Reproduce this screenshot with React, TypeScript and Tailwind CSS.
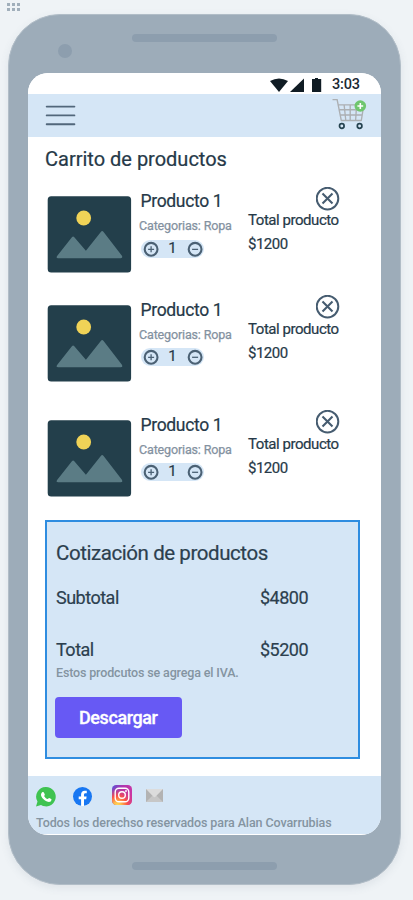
import type { ReactNode } from "react";

function Speaker({ className }: { className: string }) {
  return <div className={`h-2 w-[145.5px] rounded-full bg-[#8d9eae] ${className}`} />;
}

function GridDots() {
  return (
    <div className="grid h-[14px] shrink-0 grid-cols-[3px_3px_3px] content-start gap-[2px] pt-[3px] pl-[7px]">
      {[0, 1, 2, 3, 4, 5].map((i) => (
        <div key={i} className="size-[3px] bg-[#a1afbb]" />
      ))}
    </div>
  );
}

function StatusBar() {
  return (
    <div className="flex h-[20.5px] items-start bg-white">
      <svg className="mt-[4.5px] ml-[242px] h-[14px] w-[52px] shrink-0" viewBox="0 0 52 14" fill="#101c24">
        <path d="M0 3.1Q9 -2.2 18 3.1L9 14Z" />
        <path d="M20 14L34 .4V14Z" />
        <path d="M42 1h3V0h3v1h3.2v13H42Z" />
      </svg>
      <span className="mt-[2px] ml-[10.5px] text-[14.5px] leading-5 font-medium tracking-[-0.15px] whitespace-nowrap text-[#1c2933]">
        3:03
      </span>
    </div>
  );
}

function CartIcon() {
  return (
    <svg className="mt-[5px] h-[31px] w-[35px]" viewBox="0 0 35 31" fill="none">
      <g stroke="#acafb2" strokeWidth="1.35" strokeLinejoin="round">
        <path d="M.5 1.5h4.6l4.2 21h20l2.5-15.7H6.1M7 11.7h24M8.2 17h21.9M12.1 6.8l1.7 15.7M18.2 6.8v15.7M24.6 6.8l-1 15.7" transform="translate(0 -1)" />
      </g>
      <g stroke="#24424f" strokeWidth="1.7" fill="#d5e6f6">
        <circle cx="9.8" cy="27" r="2.3" />
        <circle cx="27.6" cy="27" r="2.3" />
      </g>
      <circle cx="28.3" cy="7" r="5.8" fill="#6fc66f" />
      <path d="M25.4 7h5.8M28.3 4.1v5.8" stroke="#fff" strokeWidth="1.6" />
    </svg>
  );
}

function Header() {
  return (
    <header className="flex h-[43px] items-start justify-between bg-[#d5e6f6] pr-[14px] pl-[17.5px]">
      <svg className="mt-[11px] h-[22px] w-[31px]" viewBox="0 0 31 22" stroke="#52677b" strokeWidth="1.9" strokeLinecap="round">
        <path d="M1.7 1.6h27.7M1.7 10.4h27.7M1.7 19.3h27.7" />
      </svg>
      <CartIcon />
    </header>
  );
}

function Picture() {
  return (
    <svg className="mt-[9px] h-[77px] w-[85px] shrink-0" viewBox="-0.4 0 85 77">
      <rect x=".3" y=".2" width="83.4" height="76.4" rx="3.5" fill="#233f4b" />
      <circle cx="36.3" cy="22" r="7.4" fill="#f0d357" />
      <path
        d="M24.7 41Q25.7 39.8 26.7 41L38.5 54.8L53.6 35.7Q54.8 34.3 56 35.7L74.5 59.7Q75.7 62.2 73.3 62.2H10.7Q8.3 62.2 9.7 60Z"
        fill="#5b7c85"
      />
    </svg>
  );
}

function RoundGlyph({ plus }: { plus?: boolean }) {
  return (
    <svg className="size-[16px]" viewBox="-.6 -.8 16 16" fill="none" stroke="#4b6174">
      <circle cx="7.5" cy="7.5" r="6.4" strokeWidth="2.1" />
      <path d={plus ? "M4.5 7.5h6M7.5 4.5v6" : "M4.5 7.5h6"} strokeWidth="1.3" />
    </svg>
  );
}

function Product({ height, lift }: { height: string; lift: string }) {
  return (
    <article className={`flex pl-[19.5px] ${height}`}>
      <Picture />
      <div className="ml-[7px] w-[109px] whitespace-nowrap">
        <h2 className="mt-1 ml-[1.5px] text-[17.5px] leading-5 tracking-[-0.33px] text-[#263948] [-webkit-text-stroke:0.2px]">
          Producto 1
        </h2>
        <p className="mt-[7px] text-[12.5px] leading-4 tracking-[-0.15px] text-[#8391a0] [-webkit-text-stroke:0.25px]">
          Categorias: Ropa
        </p>
        <div
          className={`ml-[2px] flex h-[18px] w-[63px] items-center justify-between rounded-full bg-[#d5e6f6] px-[1.5px] ${lift}`}
        >
          <RoundGlyph plus />
          <span className="-mt-[2px] text-[15px] leading-[18px] text-[#263948] [-webkit-text-stroke:0.2px]">1</span>
          <RoundGlyph />
        </div>
      </div>
      <div className="whitespace-nowrap text-[#263948] [-webkit-text-stroke:0.2px]">
        <svg
          className={`ml-[67.5px] size-6 ${lift === "mt-[6px]" ? "mt-0" : "-mt-px mb-px"}`}
          viewBox="0.5 0 24 24"
          fill="none"
          stroke="#465c70"
        >
          <circle cx="12" cy="11.6" r="10.8" strokeWidth="2" />
          <path d="M7 6.6l10 10M17 6.6l-10 10" strokeWidth="2.1" />
        </svg>
        <p className="text-[15px] leading-[18px] tracking-[-0.45px]">Total producto</p>
        <p className="mt-[6px] text-[15px] leading-[18px] tracking-[-0.5px]">$1200</p>
      </div>
    </article>
  );
}

function PriceRow({ label, price, className }: { label: string; price: string; className: string }) {
  return (
    <div className={`flex text-[18px] leading-6 tracking-[-0.5px] whitespace-nowrap ${className}`}>
      <span className="w-[204px]">{label}</span>
      <span>{price}</span>
    </div>
  );
}

function Quote() {
  return (
    <section className="ml-[17.5px] h-[239px] w-[315px] border-2 border-[#2f8de0] bg-[#d5e6f6] pl-[9px] text-[#2c3f4e]">
      <h2 className="mt-[17px] text-[20.5px] leading-7 tracking-[-0.43px] whitespace-nowrap [-webkit-text-stroke:0.2px]">
        Cotización de productos
      </h2>
      <PriceRow label="Subtotal" price="$4800" className="mt-[19px] [-webkit-text-stroke:0.2px]" />
      <PriceRow label="Total" price="$5200" className="mt-[28px] [-webkit-text-stroke:0.2px]" />
      <p className="mt-[3px] text-[12.5px] leading-4 font-medium tracking-[-0.15px] whitespace-nowrap text-[#8494a1]">
        Estos prodcutos se agrega el IVA.
      </p>
      <button className="mt-4 -ml-px flex h-[41px] w-[126.5px] items-center justify-center rounded-[4px] bg-[#6759f4] text-[18px] font-medium tracking-[-0.42px] text-white [-webkit-text-stroke:0.3px]">
        Descargar
      </button>
    </section>
  );
}

function WhatsApp() {
  return (
    <svg className="mt-[11px] h-5 w-[20px]" viewBox="0 0 20 20">
      <path d="M10 0A9.7 9.7 0 1 1 5 18L0 19.4L1.5 14.6A9.7 9.7 0 0 1 10 0Z" fill="#3fc351" />
      <path
        d="M6.2 5.3c.5-.6 1.4-.5 1.7.1l.9 2c.2.6-.7 1.2-.7 1.6.8 1.6 2.1 2.6 3.6 3.1.5.1.9-1.2 1.5-1l2 1c.7.4.1 1.8-.5 2.3-1.5 1-3.8.3-5.7-.9-2-1.3-3.8-3.5-4-5.2-.1-1.2.5-2.3 1.2-3Z"
        fill="#fff"
      />
    </svg>
  );
}

function Facebook() {
  return (
    <svg className="mt-[11px] ml-[17px] h-[19px] w-[19px]" viewBox="0 0 24 24">
      <circle cx="12" cy="12" r="12" fill="#1877f2" />
      <path
        d="M16.7 15.5l.5-3.5h-3.3V9.7c0-1 .5-1.9 2-1.9h1.5v-3s-1.4-.2-2.7-.2c-2.7 0-4.5 1.7-4.5 4.7V12h-3v3.5h3v8.4a12 12 0 0 0 3.7 0v-8.4Z"
        fill="#fff"
      />
    </svg>
  );
}

function Instagram() {
  return (
    <svg className="mt-[9px] ml-[20px] size-5" viewBox="0 0 20 20">
      <defs>
        <linearGradient id="ig-base" x1="0" y1="0" x2="1" y2=".25">
          <stop offset="0" stopColor="#5a51d5" />
          <stop offset=".5" stopColor="#ae36b0" />
          <stop offset="1" stopColor="#c936a5" />
        </linearGradient>
        <radialGradient id="ig-glow" cx=".27" cy="1.05" r=".95">
          <stop offset="0" stopColor="#ffdc5c" />
          <stop offset=".2" stopColor="#ffc14c" />
          <stop offset=".52" stopColor="#fb5245" />
          <stop offset="1" stopColor="#d13494" stopOpacity="0" />
        </radialGradient>
      </defs>
      <rect width="20" height="20" rx="4.2" fill="url(#ig-base)" />
      <rect width="20" height="20" rx="4.2" fill="url(#ig-glow)" />
      <g fill="none" stroke="#fff" strokeWidth="1.4">
        <rect x="3.2" y="3.2" width="13.6" height="13.6" rx="3.8" />
        <circle cx="10" cy="10" r="3.3" />
      </g>
      <circle cx="14" cy="6" r=".95" fill="#fff" />
    </svg>
  );
}

function Mail() {
  return (
    <svg className="mt-[13px] ml-[14px] h-[13px] w-[17px]" viewBox="0 0 17 13">
      <path d="M0 0H17V13H0Z" fill="#b3b3b3" />
      <path d="M0 13L6.6 6.4h3.8L17 13Z" fill="#c7c7c7" />
      <path d="M0 0H17L9.7 7.6Q8.5 8.8 7.3 7.6Z" fill="#dcdcdc" />
    </svg>
  );
}

function Footer() {
  return (
    <footer className="mt-[17px] h-[58.3px] bg-[#d5e6f6] pl-[8.5px]">
      <div className="flex h-[39px] items-start">
        <WhatsApp />
        <Facebook />
        <Instagram />
        <Mail />
      </div>
      <p className="text-[12.5px] leading-4 font-medium tracking-[-0.1px] whitespace-nowrap text-[#8494a1]">
        Todos los derechso reservados para Alan Covarrubias
      </p>
    </footer>
  );
}

function Phone({ children }: { children: ReactNode }) {
  return (
    <div className="mt-[.3px] ml-2 h-[871px] w-[392.5px] shrink-0 rounded-[52px] border border-[#b1bdc7] bg-[#9dacb9] shadow-[0_3px_9px_rgba(80,100,120,0.10)]">
      <div className="flex h-[58.2px] items-start">
        <div className="mt-[28.5px] ml-[48.5px] size-[14px] rounded-full bg-[#8d9eae]" />
        <Speaker className="mt-[18.7px] ml-[60px]" />
      </div>
      <div className="ml-[18.5px] h-[761.5px] w-[353.5px] overflow-hidden rounded-[20px] bg-white">{children}</div>
      <Speaker className="mt-[27.3px] ml-[122.5px]" />
    </div>
  );
}

export default function App() {
  return (
    <div className="flex h-[900px] w-[413px] flex-col overflow-hidden bg-[#eff3f6] font-['Roboto',sans-serif]">
      <GridDots />
      <Phone>
        <StatusBar />
        <Header />
        <main>
          <h1 className="ml-[17.5px] h-[50px] pt-[8px] text-[20px] leading-7 whitespace-nowrap text-[#263948] [-webkit-text-stroke:0.2px]">
            Carrito de productos
          </h1>
          <Product height="h-[109px]" lift="mt-[6px]" />
          <Product height="h-[115px]" lift="mt-[5px]" />
          <Product height="h-[109px]" lift="mt-[5px]" />
          <Quote />
        </main>
        <Footer />
      </Phone>
    </div>
  );
}
